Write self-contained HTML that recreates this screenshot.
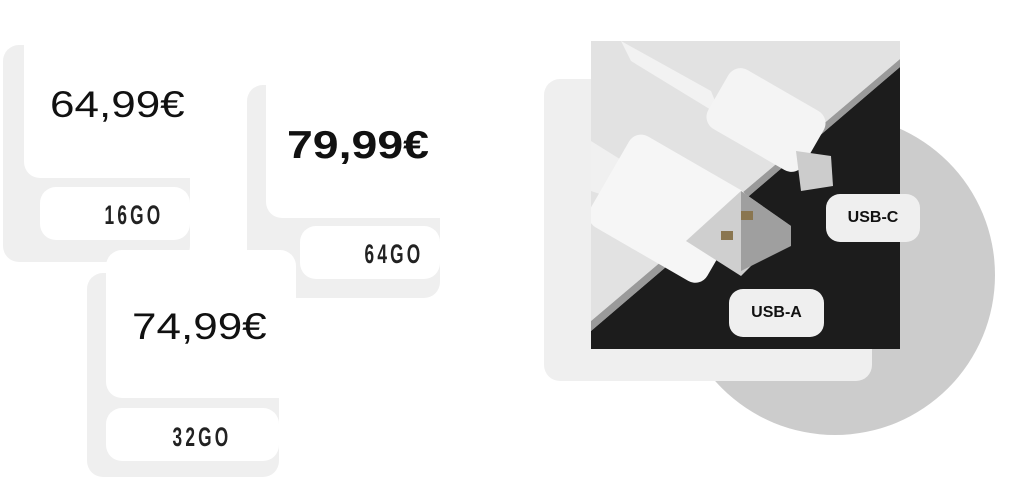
<!DOCTYPE html>
<html><head><meta charset="utf-8"><style>
body{margin:0;width:1020px;height:486px;background:#fff;position:relative;overflow:hidden;font-family:"Liberation Sans",sans-serif}
div{position:absolute;box-sizing:border-box}
.g{background:#efefef;border-radius:16px}
.w{background:#fff;border-radius:16px}
.p{font-size:37px;color:#111;white-space:nowrap;transform-origin:0 0;transform:scaleX(1.19)}
.l{font-weight:bold;font-size:27px;letter-spacing:5px;color:#222;text-align:center;transform:scaleX(0.64)}
.t{background:#efefef;border-radius:14px;font-weight:bold;font-size:16px;color:#111;display:flex;align-items:center;justify-content:center}
</style></head><body>
<div class="g" style="left:3px;top:45px;width:187px;height:217px"></div>
<div class="w" style="left:24px;top:20px;width:190px;height:158px"></div>
<div class="w" style="left:40px;top:187px;width:150px;height:53px"></div>
<div class="p" style="left:50px;top:84px">64,99€</div>
<div class="l" style="left:54px;top:200px;width:160px">16GO</div>

<div class="g" style="left:247px;top:85px;width:193px;height:213px"></div>
<div class="w" style="left:266px;top:60px;width:190px;height:158px"></div>
<div class="w" style="left:300px;top:226px;width:140px;height:53px"></div>
<div class="p" style="left:287px;top:124px;font-weight:bold;font-size:39px">79,99€</div>
<div class="l" style="left:314px;top:239px;width:160px">64GO</div>

<div class="g" style="left:87px;top:273px;width:192px;height:204px"></div>
<div class="w" style="left:106px;top:250px;width:190px;height:148px"></div>
<div class="w" style="left:106px;top:408px;width:173px;height:53px"></div>
<div class="p" style="left:132px;top:306px">74,99€</div>
<div class="l" style="left:122px;top:422px;width:160px">32GO</div>

<div style="left:675px;top:115px;width:320px;height:320px;border-radius:50%;background:#cccccc"></div>
<div class="g" style="left:544px;top:79px;width:328px;height:302px"></div>
<svg style="position:absolute;left:591px;top:41px" width="309" height="308" viewBox="0 0 309 308">
<rect width="309" height="308" fill="#d9d9d9"/>
<polygon points="0,290 309,26 309,308 0,308" fill="#1c1c1c"/>
<polygon points="0,280 309,18 309,26 0,290" fill="#9a9a9a"/>
<path d="M0,0 L309,0 L309,18 L0,280Z" fill="#e2e2e2"/>
<path d="M30,0 L120,50 L130,75 L40,20Z" fill="#f2f2f2"/>
<rect x="120" y="45" width="110" height="68" rx="14" fill="#f4f4f4" transform="rotate(30 175 79)"/>
<path d="M205,110 L240,115 L242,145 L210,150Z" fill="#ccc"/>
<path d="M0,100 L40,125 L30,160 L0,150Z" fill="#f0f0f0"/>
<rect x="10" y="115" width="135" height="105" rx="14" fill="#f6f6f6" transform="rotate(30 77 167)"/>
<polygon points="95,200 150,150 200,185 150,235" fill="#cfcfcf"/>
<polygon points="150,150 200,185 200,205 150,230" fill="#9f9f9f"/>
<rect x="150" y="170" width="12" height="9" fill="#8a7650"/>
<rect x="130" y="190" width="12" height="9" fill="#8a7650"/>
</svg>
<div class="t" style="left:826px;top:194px;width:94px;height:48px">USB-C</div>
<div class="t" style="left:729px;top:289px;width:95px;height:48px">USB-A</div>
</body></html>
